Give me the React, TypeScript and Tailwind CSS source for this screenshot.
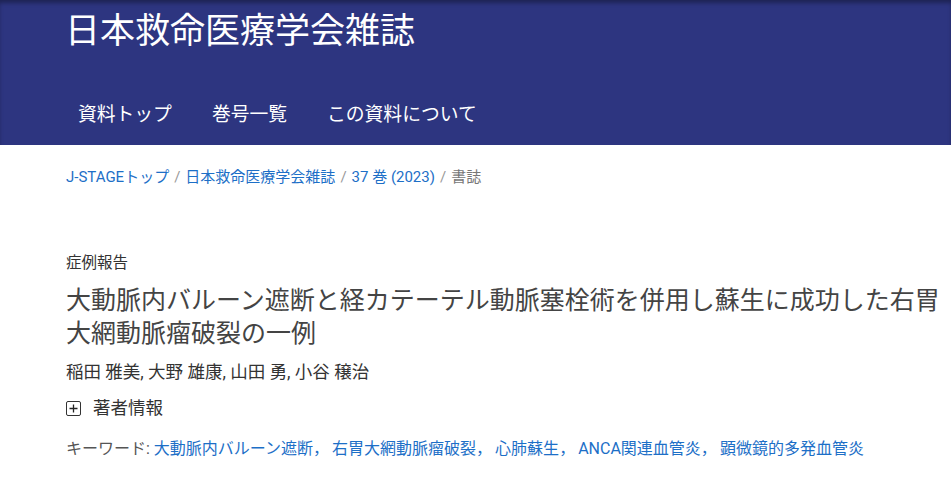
const font = "font-['Roboto','Noto_Sans_CJK_JP',sans-serif]";

const navItems = ["資料トップ", "巻号一覧", "この資料について"];

const crumbs = ["J-STAGEトップ", "日本救命医療学会雑誌", "37 巻 (2023)"];

const keywords = [
  "大動脈内バルーン遮断",
  "右胃大網動脈瘤破裂",
  "心肺蘇生",
  "ANCA関連血管炎",
  "顕微鏡的多発血管炎",
];

const App = () => {
  return (
    <div className={`${font} w-[951px] h-[479px] overflow-hidden bg-white`}>
      <header className="h-[145px] bg-[#2d3580] shadow-[inset_0_4px_4px_-1px_rgba(0,0,0,0.35)] flex flex-col">
        <h1 className="pl-[65px] pt-[10px] text-[35px] leading-[44px] text-white font-normal">
          日本救命医療学会雑誌
        </h1>
        <nav className="flex pl-[58px] mt-[47px]">
          {navItems.map((item) => (
            <a
              key={item}
              className="px-[20px] text-[18.8px] leading-[28px] text-white cursor-pointer"
            >
              {item}
            </a>
          ))}
        </nav>
      </header>

      <main className="pl-[66px] pr-[8px]">
        <div className="pt-[22px] flex items-center text-[15px] leading-[20px]">
          {crumbs.map((c) => (
            <span key={c} className="flex items-center">
              <a className="text-[#1d6fc7] cursor-pointer">{c}</a>
              <span className="text-[#999] px-[5px]">/</span>
            </span>
          ))}
          <span className="text-[#777]">書誌</span>
        </div>

        <p className="mt-[66px] text-[15.5px] leading-[20px] text-[#333]">症例報告</p>

        <h2 className="mt-[11px] text-[25px] leading-[33px] text-[#444] font-normal">
          大動脈内バルーン遮断と経カテーテル動脈塞栓術を併用し蘇生に成功した右胃大網動脈瘤破裂の一例
        </h2>

        <p className="mt-[11px] text-[17.5px] leading-[22px] text-[#333]">
          稲田 雅美, 大野 雄康, 山田 勇, 小谷 穣治
        </p>

        <div className="mt-[13px] flex items-center gap-[12px] text-[17.5px] leading-[24px] text-[#333]">
          <span className="shrink-0 w-[15px] h-[15px] border border-[#333] rounded-[2px] flex items-center justify-center">
            <svg width="9" height="9" viewBox="0 0 9 9">
              <path d="M4.5 0.5v8M0.5 4.5h8" stroke="#222" strokeWidth="1.3" />
            </svg>
          </span>
          著者情報
        </div>

        <p className="mt-[18px] text-[16px] leading-[22px] text-[#555]">
          キーワード:{" "}
          {keywords.map((k, i) => (
            <span key={k}>
              <a className="text-[#1d6fc7] cursor-pointer">{k}</a>
              {i < keywords.length - 1 && (
                <span className="text-[#1d6fc7] mr-[3px]">，</span>
              )}
            </span>
          ))}
        </p>
      </main>
    </div>
  );
};

export default App;
